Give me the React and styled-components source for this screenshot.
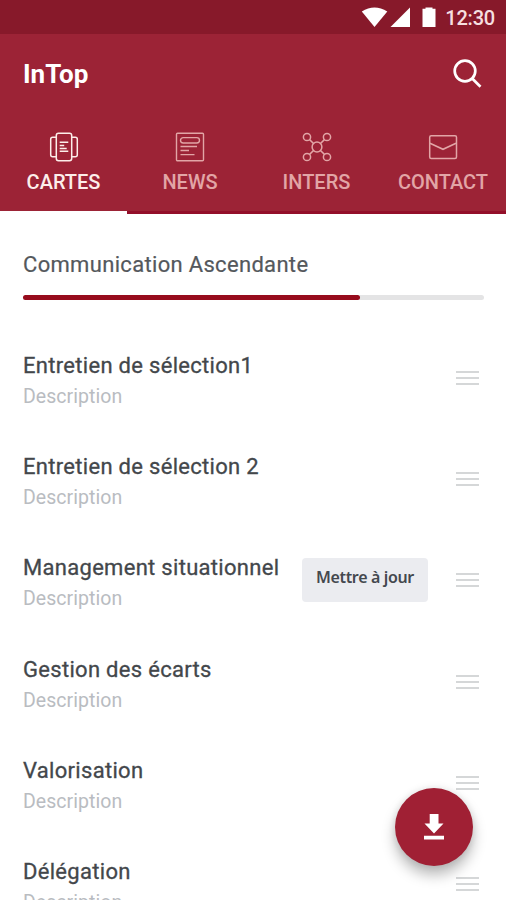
import styled, { createGlobalStyle } from 'styled-components';
import { useState } from 'react';

const GlobalStyle = createGlobalStyle`
  * {
    box-sizing: border-box;
  }
  body {
    margin: 0;
    background: #fff;
    font-family: Roboto, 'Liberation Sans', sans-serif;
  }
`;

const Screen = styled.div`
  width: 506px;
  height: 900px;
  overflow: hidden;
  display: flex;
  flex-direction: column;
`;

const StatusBar = styled.div`
  flex: none;
  height: 34px;
  padding-right: 11px;
  display: flex;
  align-items: center;
  justify-content: flex-end;
  background: #87192a;
  color: #f6dfe0;
`;

const Clock = styled.span`
  margin-left: 8px;
  padding-top: 1px;
  font-size: 20px;
  font-weight: 500;
  line-height: 34px;
  letter-spacing: -0.2px;
`;

const Header = styled.header`
  flex: none;
  height: 180px;
  display: flex;
  flex-direction: column;
  background: #9c2336;
`;

const TitleBar = styled.div`
  height: 78px;
  padding: 0 24px 0 23px;
  display: flex;
  align-items: center;
  justify-content: space-between;
`;

const AppName = styled.h1`
  margin: 0;
  padding-top: 2px;
  font-size: 26px;
  font-weight: 700;
  color: #fff;
`;

const SearchButton = styled.button`
  padding: 0;
  border: 0;
  background: none;
  display: flex;
`;

const Tabs = styled.nav`
  flex: 1;
  display: grid;
  grid-template-columns: 127px 126px 127px 126px;
`;

const Tab = styled.button`
  padding: 20px 0 0;
  border: 0;
  border-bottom: 3px solid ${(props) => (props.$active ? '#fff' : '#930f2a')};
  background: none;
  color: ${(props) => (props.$active ? '#fdeeea' : '#e2a5a6')};
  font-family: inherit;
  font-size: 20px;
  font-weight: 500;
  display: flex;
  flex-direction: column;
  align-items: center;
  white-space: nowrap;
`;

const TabLabel = styled.span`
  margin-top: 7px;
  line-height: 26px;
`;

const Progress = styled.section`
  flex: none;
  height: 113.3px;
  padding: 36px 22px 0 23px;
`;

const ProgressTitle = styled.h2`
  margin: 0;
  font-size: 22px;
  line-height: 30px;
  font-weight: 400;
  letter-spacing: 0.32px;
  -webkit-text-stroke: 0.2px #54585c;
  color: #54585c;
`;

const Track = styled.div`
  margin-top: 14.5px;
  height: 5px;
  border-radius: 3px;
  background: #e4e4e5;
`;

const Bar = styled.div`
  height: 100%;
  border-radius: 3px;
  background: #970c1d;
`;

const List = styled.ul`
  margin: 0;
  padding: 0;
  list-style: none;
`;

const Row = styled.li`
  height: 101.25px;
  padding: 0 27px 0 23px;
  display: flex;
  align-items: center;
`;

const RowText = styled.div`
  flex: 1;
  padding-top: 7px;
`;

const RowTitle = styled.div`
  font-size: 22px;
  line-height: 30px;
  letter-spacing: 0.3px;
  -webkit-text-stroke: 0.3px #43474b;
  color: #43474b;
`;

const RowDescription = styled.div`
  font-size: 19.5px;
  line-height: 31px;
  letter-spacing: 0.05px;
  color: #b9bcc1;
`;

const UpdateButton = styled.button`
  width: 126px;
  height: 44px;
  margin-right: 28px;
  padding: 0 0 6px;
  border: 0;
  border-radius: 4px;
  background: #ebecf0;
  color: #44484e;
  font: 600 16px 'Noto Sans', 'Open Sans', sans-serif;
  letter-spacing: -0.35px;
  white-space: nowrap;
`;

const Handle = styled.div`
  width: 23px;
  height: 14px;
  border-top: 2px solid #d5d7d8;
  border-bottom: 2px solid #d5d7d8;
  display: flex;
  align-items: center;

  &::before {
    content: '';
    width: 100%;
    height: 2px;
    background: #d5d7d8;
  }
`;

const Fab = styled.button`
  position: fixed;
  left: 394.5px;
  top: 788px;
  width: 78px;
  height: 78px;
  padding: 0;
  border: 0;
  border-radius: 50%;
  background: #a02034;
  box-shadow: 0 9px 14px rgba(0, 0, 0, 0.28), 0 0 9px rgba(0, 0, 0, 0.1);
  display: flex;
  align-items: center;
  justify-content: center;
`;

function StatusIcons() {
  return (
    <svg width="76" height="22" viewBox="361 6 76 22" fill="#fff">
      <path d="M361.8 11.5Q374.5 3.5 387.3 11.5L374.5 27Z" />
      <path d="M410 7.5V27H390.5Z" />
      <path d="M425.5 7.5h7v1.3h3V27h-13V8.8h3z" />
    </svg>
  );
}

function CardsIcon() {
  return (
    <svg width="30" height="30" viewBox="0 0 30 30" fill="none" stroke="currentColor" strokeWidth="1.5">
      <rect x="7.3" y="1.3" width="15.4" height="27.4" rx="2.2" />
      <path d="M7 5.3H3.7a2 2 0 0 0-2 2v15.4a2 2 0 0 0 2 2H7M23 5.3h3.3a2 2 0 0 1 2 2v15.4a2 2 0 0 1-2 2H23" />
      <path d="M10.7 10.3h8.6M10.7 13.6h4.5M10.7 16.4h7M10.7 19.3h8.6" />
    </svg>
  );
}

function NewsIcon() {
  return (
    <svg width="30" height="30" viewBox="0 0 30 30" fill="none" stroke="currentColor" strokeWidth="1.4">
      <rect x="1.5" y="1.3" width="27" height="27.4" rx="1" />
      <rect x="5.5" y="5.6" width="19" height="5.4" rx="2.7" />
      <path d="M5.5 14.5h16.5M5.5 18.5h8.5M5.5 22.6h14" />
    </svg>
  );
}

function NetworkIcon() {
  return (
    <svg width="30" height="30" viewBox="0 0 30 30" fill="none" stroke="currentColor" strokeWidth="1.5">
      <circle cx="15" cy="15" r="4.9" />
      <circle cx="5" cy="5" r="3.6" />
      <circle cx="25" cy="5" r="3.6" />
      <circle cx="5" cy="25" r="3.6" />
      <circle cx="25" cy="25" r="3.6" />
      <path d="M7.6 7.6l3.9 3.9M22.4 7.6l-3.9 3.9M7.6 22.4l3.9-3.9M22.4 22.4l-3.9-3.9" />
    </svg>
  );
}

function MailIcon() {
  return (
    <svg width="30" height="30" viewBox="0 0 30 30" fill="none" stroke="currentColor" strokeWidth="1.5">
      <rect x="1.7" y="3.7" width="26.8" height="22.8" rx="1.5" />
      <path d="M2 11.3l13 6 13-6" />
    </svg>
  );
}

const tabs = [
  { label: 'CARTES', Icon: CardsIcon },
  { label: 'NEWS', Icon: NewsIcon },
  { label: 'INTERS', Icon: NetworkIcon },
  { label: 'CONTACT', Icon: MailIcon },
];

const cards = [
  { title: 'Entretien de sélection1' },
  { title: 'Entretien de sélection 2' },
  { title: 'Management situationnel', update: true },
  { title: 'Gestion des écarts' },
  { title: 'Valorisation' },
  { title: 'Délégation' },
];

function App() {
  const [current, setCurrent] = useState('CARTES');
  const progress = 73.2;
  return (
    <Screen>
      <GlobalStyle />
      <StatusBar>
        <StatusIcons />
        <Clock>12:30</Clock>
      </StatusBar>
      <Header>
        <TitleBar>
          <AppName>InTop</AppName>
          <SearchButton aria-label="Rechercher">
            <svg width="31" height="31" viewBox="0 0 31 31" fill="none" stroke="#fff" strokeWidth="2.7">
              <circle cx="14" cy="13" r="10.3" />
              <path d="M21.2 20.5l8.3 8.3" />
            </svg>
          </SearchButton>
        </TitleBar>
        <Tabs>
          {tabs.map(({ label, Icon }) => (
            <Tab key={label} $active={label === current} onClick={() => setCurrent(label)}>
              <Icon />
              <TabLabel>{label}</TabLabel>
            </Tab>
          ))}
        </Tabs>
      </Header>
      <Progress>
        <ProgressTitle>Communication Ascendante</ProgressTitle>
        <Track>
          <Bar style={{ width: `${progress}%` }} />
        </Track>
      </Progress>
      <List>
        {cards.map((card) => (
          <Row key={card.title}>
            <RowText>
              <RowTitle>{card.title}</RowTitle>
              <RowDescription>Description</RowDescription>
            </RowText>
            {card.update && <UpdateButton>Mettre à jour</UpdateButton>}
            <Handle />
          </Row>
        ))}
      </List>
      <Fab aria-label="Télécharger">
        <svg width="20" height="26" viewBox="0 0 20 26" fill="#fff">
          <path d="M5.7 0h8.8v9.5h5L10 19.5 0.5 9.5h5.2zM0 21.8h20v3.7H0z" />
        </svg>
      </Fab>
    </Screen>
  );
}

export default App;
